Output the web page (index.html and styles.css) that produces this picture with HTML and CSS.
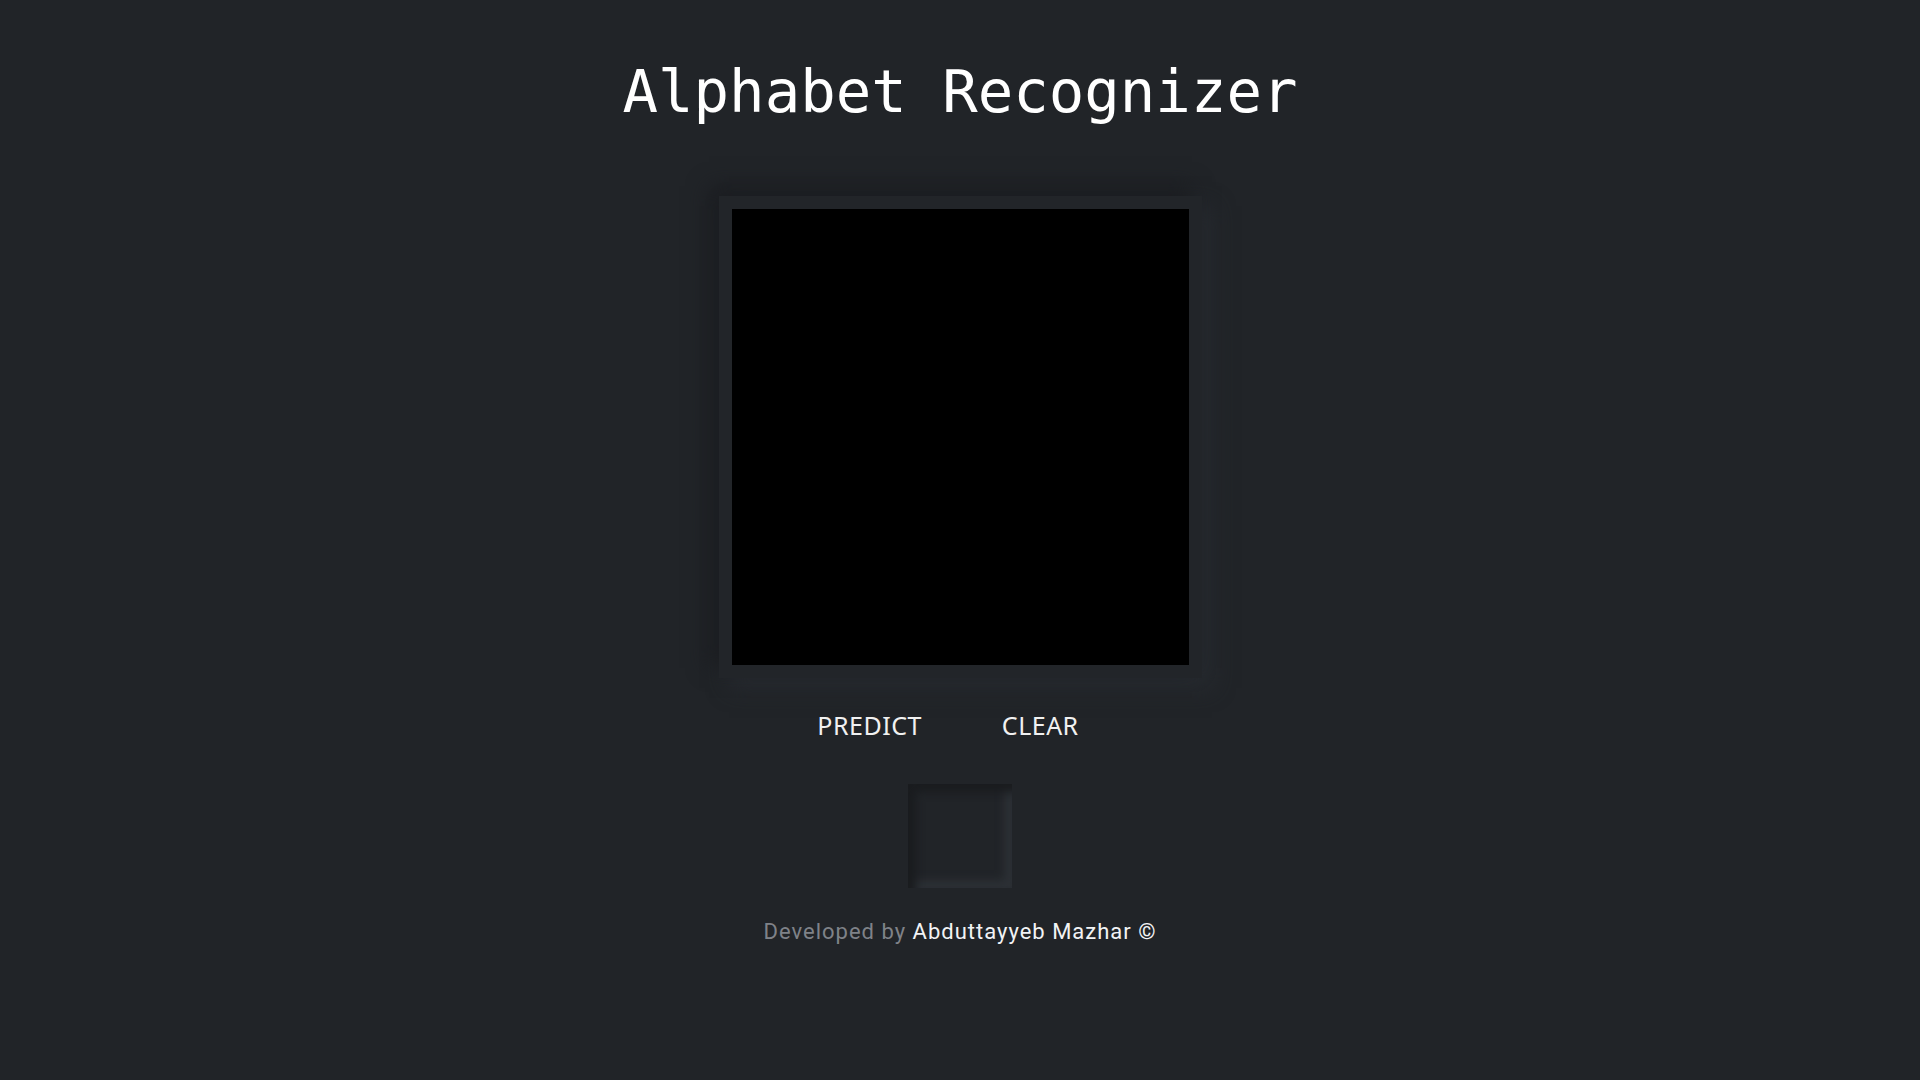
FILE: index.html
```html
<!DOCTYPE html>
<html lang="en">
<head>
<meta charset="utf-8">
<title>Alphabet Recognizer</title>
<link rel="stylesheet" href="styles.css">
</head>
<body>
<main class="app">
  <h1 class="title">Alphabet Recognizer</h1>
  <div class="frame">
    <div class="canvas"></div>
  </div>
  <div class="actions">
    <button class="btn">PREDICT</button>
    <button class="btn">CLEAR</button>
  </div>
  <div class="result"></div>
  <p class="footer"><span class="muted">Developed by</span> <span class="name">Abduttayyeb Mazhar ©</span></p>
</main>
</body>
</html>
```
FILE: styles.css
```css
html, body {
  margin: 0;
  padding: 0;
  background: #212428;
  height: 100%;
}
.app {
  display: flex;
  flex-direction: column;
  align-items: center;
}
.title {
  margin: 58px 0 0;
  font-family: "DejaVu Sans Mono", "Liberation Mono", monospace;
  font-weight: normal;
  font-size: 59px;
  line-height: 1.164;
  color: #ffffff;
}
.frame {
  margin-top: 69px;
  padding: 13px;
  background: #222529;
  box-shadow: -10px -10px 20px #1b1d21, 10px 10px 20px #272b30;
}
.canvas {
  width: 457px;
  height: 456px;
  background: #000;
}
.actions {
  margin-top: 30px;
  display: flex;
  gap: 80px;
  padding-right: 24px;
}
.btn {
  background: none;
  border: none;
  padding: 0;
  font-family: "Noto Sans", "Open Sans", sans-serif;
  font-size: 25px;
  letter-spacing: 0.5px;
  line-height: 1.362;
  color: #f1f1f1;
  cursor: pointer;
}
.result {
  margin-top: 42px;
  width: 104px;
  height: 104px;
  background: #212428;
  box-shadow: inset 8px 8px 8px #1a1c1f, inset -8px -8px 8px #2c3035;
}
.footer {
  margin: 31px 0 0;
  font-family: Roboto, "Noto Sans", sans-serif;
  font-size: 22px;
  letter-spacing: 1px;
  line-height: 1.172;
}
.muted { color: #7f8288; }
.name { color: #f2f3f5; }
```
